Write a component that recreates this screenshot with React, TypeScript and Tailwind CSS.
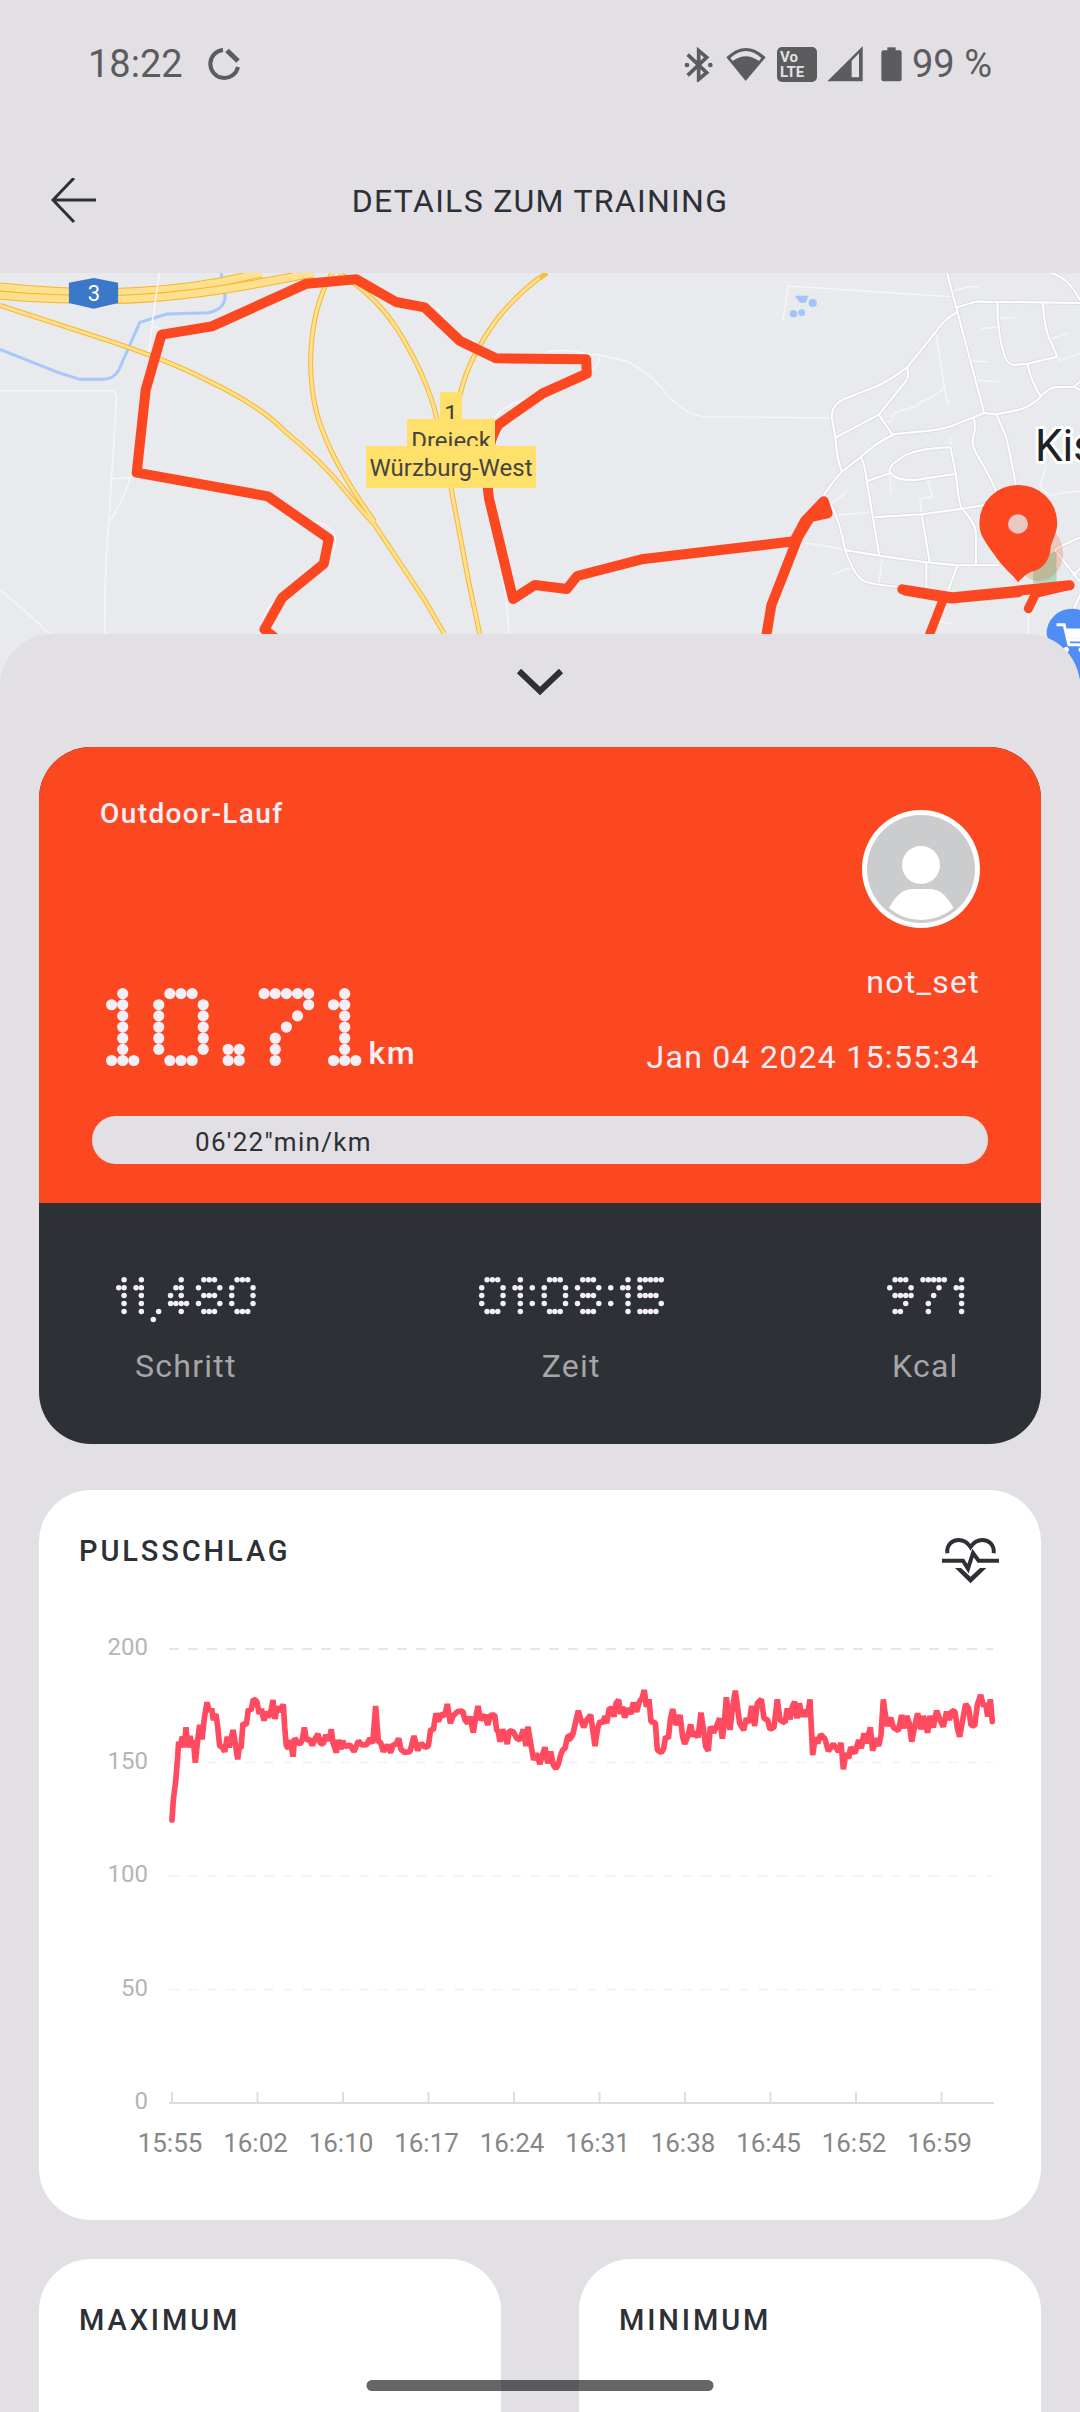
import React from 'react';

type Glyph = { cols: number; rows: string[] };

const SMALL_GLYPHS: Record<string, Glyph> = {
  '0': { cols: 5, rows: ['.###.', '#...#', '#...#', '#...#', '.###.'] },
  '1': { cols: 2, rows: ['.#', '##', '.#', '.#', '.#'] },
  '4': { cols: 4, rows: ['..#.', '.##.', '#.#.', '####', '..#.'] },
  '5': { cols: 5, rows: ['#####', '#....', '####.', '....#', '####.'] },
  '7': { cols: 5, rows: ['#####', '...#.', '..#..', '.#...', '.#...'] },
  '8': { cols: 5, rows: ['.###.', '#...#', '.###.', '#...#', '.###.'] },
  '9': { cols: 5, rows: ['.###.', '#...#', '.####', '...#.', '.##..'] },
  ':': { cols: 1, rows: ['.', '#', '.', '#', '.'] },
  ',': { cols: 2, rows: ['..', '..', '..', '..', '.#', '#.'] },
};

const LARGE_GLYPHS: Record<string, Glyph> = {
  '0': { cols: 5, rows: ['.###.', '#...#', '#...#', '#...#', '#...#', '#...#', '.###.'] },
  '1': { cols: 3, rows: ['.#.', '##.', '.#.', '.#.', '.#.', '.#.', '###'] },
  '7': { cols: 5, rows: ['#####', '....#', '...#.', '..#..', '.#...', '.#...', '.#...'] },
  '.': { cols: 2, rows: ['..', '..', '..', '..', '..', '##', '##'] },
};

function DotDisplay({ value, large = false }: { value: string; large?: boolean }) {
  const glyphs = large ? LARGE_GLYPHS : SMALL_GLYPHS;
  const px = large ? 11.12 : 5.33;
  const py = large ? 11.15 : 7.93;
  const r = large ? 5.6 : 2.75;
  const rowCount = large ? 7 : 5;
  const dots: { x: number; y: number }[] = [];
  let cursor = 0;
  for (const ch of value) {
    const glyph = glyphs[ch];
    glyph.rows.forEach((row, j) => {
      [...row].forEach((cell, i) => {
        if (cell === '#') dots.push({ x: r + (cursor + i) * px, y: r + j * py });
      });
    });
    cursor += glyph.cols + 1.24;
  }
  const width = (cursor - 2.24) * px + 2 * r;
  const height = (rowCount - 1) * py + 2 * r;
  return (
    <svg role="img" aria-label={value} width={width} height={height} className="block overflow-visible fill-[#f4eff7]">
      {dots.map((d, i) => (
        <circle key={i} cx={d.x} cy={d.y} r={r} />
      ))}
    </svg>
  );
}

function StatusBar() {
  return (
    <div className="flex h-32 items-center justify-between pr-[88px] pl-[88px] text-[38px] leading-[44px] text-[#5c5b5e]">
      <div className="flex items-center gap-6">
        <span>18:22</span>
        <svg width="34" height="34" viewBox="0 0 34 34" fill="none" stroke="currentColor" strokeWidth="4" className="block">
          <path d="M16 3A14 14 0 1 0 31 20" />
          <path d="M20 3.500L31 14" strokeWidth="5" />
        </svg>
      </div>
      <div className="flex items-center">
        <svg width="30" height="35" viewBox="75 45 90 105" className="block">
          <path d="M86 68L143 122L119 142V56L143 76L86 130" fill="none" stroke="currentColor" strokeWidth="11" />
          <circle cx="84" cy="99" r="7" fill="currentColor" />
          <circle cx="154" cy="99" r="7" fill="currentColor" />
        </svg>
        <svg width="40" height="35" viewBox="200 45 120 105" className="ml-3 block">
          <path d="M201 76Q260 20 319 76L259 147Z" fill="currentColor" />
          <path d="M213 78Q260 36 306 78L299 87Q259 59 220 87Z" fill="#e2e0e5" />
        </svg>
        <div className="ml-[11px] flex h-[35px] w-10 flex-col rounded-[5px] bg-[#5c5b5e] pt-[3px] pl-[3px] text-[15px] leading-[15px] font-bold text-[#e2e0e5]">
          <span>Vo</span>
          <span>LTE</span>
        </div>
        <svg width="36" height="36" viewBox="502 46 108 108" className="ml-2.5 block">
          <path d="M503 152L609 47V152Z" fill="currentColor" />
          <path d="M576 90L598 68V140H576Z" fill="#e2e0e5" />
        </svg>
        <svg width="21" height="35" viewBox="665 47 63 105" className="ml-[18px] block" fill="currentColor">
          <rect x="666" y="57" width="61" height="93" rx="7" />
          <rect x="684" y="48" width="25" height="14" />
        </svg>
        <span className="ml-2.5">99 %</span>
      </div>
    </div>
  );
}

function Header() {
  return (
    <header className="grid h-[145px] grid-cols-[120px_1fr_120px] items-center text-[#2d3035]">
      <button aria-label="Zurück" className="flex h-full items-center pl-[51px]">
        <svg width="46" height="46" viewBox="0 0 46 46" fill="none" stroke="currentColor" strokeWidth="3" className="block">
          <path d="M45 22H2M23 0L2 22L23 44" />
        </svg>
      </button>
      <h1 className="text-center text-[32px] leading-10 tracking-[0.04em]">DETAILS ZUM TRAINING</h1>
    </header>
  );
}

const LEFT = 'translate(0 -3) scale(0.34436 0.33333)';
const RIGHT = 'translate(540 -3) scale(0.34436 0.33333)';

const HIGHWAYS = [
  'M0 51Q160 68 300 69Q480 66 640 36L760 9',
  'M0 76Q160 90 320 89Q520 84 740 42L910 9',
];
const RAMPS = [
  'M0 106L250 190Q480 265 600 330Q760 410 825 482Q930 570 1000 658Q1060 735 1085 760L1230 985L1290 1091',
  'M965 9Q905 110 902 270Q902 400 940 490Q980 600 1088 755',
  'M985 9Q1090 75 1155 180Q1240 320 1270 450L1310 655L1360 930L1393 1091',
  'M1568 22Q1500 75 1445 145Q1360 265 1337 370Q1318 440 1310 520',
];
const STREETS = [
  'M1182 9L1290 429',
  'M1210 112L1255 98Q1270 94 1290 95L1568 99',
  'M1210 128Q1170 150 1150 185L1066 292Q1010 335 975 350L880 388Q847 405 847 440L858 505Q862 570 877 605',
  'M1066 292Q1072 320 1065 330L984 434L1022 492',
  'M984 434L858 503',
  'M822 680Q845 640 877 605L932 560Q980 515 1030 492L1130 482Q1185 474 1200 466L1290 429L1325 433L1390 420Q1420 412 1450 385Q1475 355 1495 352L1550 350L1568 335',
  'M1550 350L1568 360',
  'M1328 98Q1328 190 1348 255Q1358 285 1378 285L1415 281L1502 260',
  'M1460 100Q1465 175 1480 208L1502 260',
  'M1415 283Q1430 345 1455 380',
  'M1478 9Q1530 15 1568 90',
  'M1325 433Q1355 500 1358 520Q1375 600 1382 650',
  'M1258 440Q1268 470 1258 500Q1252 525 1270 555Q1310 625 1325 665',
  'M932 560Q945 590 950 640L985 855',
  'M950 633L1016 610Q1010 590 1040 570Q1080 535 1192 532L1208 612Q1215 700 1225 715Q1265 760 1266 790V885',
  'M1016 605Q1030 632 1090 630L1208 611',
  'M972 742L1110 733L1225 716L1290 705',
  'M1108 733L1132 878',
  'M845 705Q870 750 886 840L985 857L1120 877L1210 886H1335',
  'M886 840Q910 910 935 930Q960 945 1060 952',
  'M1122 878V955',
  'M1212 886L1185 962',
  'M1495 840Q1510 828 1568 802',
  'M1495 840L1568 935',
  'M1568 895L1548 918',
  'M1568 975L1545 1030',
  'M1390 969H1430',
];
const LANES_RIGHT = [
  'M720 48L1197 80M1200 62L1245 50H1275',
  'M720 48L706 152',
  'M20 245Q80 235 140 252L174 255L250 273Q300 295 350 350Q410 430 470 440L845 444',
  'M174 255Q170 290 150 300',
  'M1150 188L1174 352L1186 408M1174 352Q1165 370 1102 398L1100 406L1027 430L1020 455H1006',
  'M1330 144H1378M1282 176L1328 171M1255 272L1300 276M1268 331L1332 335',
  'M1480 208L1535 188M1502 260L1510 272L1568 250',
  'M1193 505V532M1016 612L1020 672M1125 630L1140 680L1103 687L1108 730',
  'M850 700L890 665M865 735L960 727M768 818L826 827L886 840M852 912L905 892M994 862L984 940',
  'M1470 585L1452 650L1478 676L1568 662M1418 1020V1091M1160 1055L1194 1061',
];
const LANES_LEFT = [
  'M463 9L430 262M440 168L470 176',
  'M0 362H325Q338 365 338 390L316 760Q303 900 304 1091',
  'M320 628L378 622Q365 680 316 758',
  'M0 962Q80 1025 142 1091',
  'M900 752Q975 765 975 815Q972 850 945 870M800 990Q765 1020 760 1070',
  'M1265 112Q1285 125 1290 150M1440 278H1500M1434 445Q1470 400 1540 385',
  'M1415 690L1470 985L1478 1091',
];

function MapView() {
  return (
    <section aria-label="Karte" className="relative h-[413px] overflow-hidden bg-[#e8eaed]">
      <svg
        viewBox="0 0 1080 413"
        preserveAspectRatio="xMidYMin slice"
        fill="none"
        className="block h-full w-full [&_path]:[vector-effect:non-scaling-stroke]"
      >
        <g transform={LEFT} strokeLinejoin="round">
          <g stroke="#f5f6f7" strokeWidth="1.5">
            {LANES_LEFT.map((d) => <path key={d} d={d} />)}
          </g>
          <path
            d="M0 238L170 308L232 328H300Q330 327 345 300L406 157L485 132L605 128Q650 118 653 85V60L642 9"
            stroke="#a8c7fa"
            strokeWidth="3"
          />
          {HIGHWAYS.map((d) => (
            <g key={d}>
              <path d={d} stroke="#f6b62a" strokeWidth="9" />
              <path d={d} stroke="#fee08f" strokeWidth="7" />
            </g>
          ))}
          {RAMPS.map((d) => <path key={d} d={d} stroke="#f5b830" strokeWidth="5" />)}
          {RAMPS.map((d) => <path key={d} d={d} stroke="#fee08f" strokeWidth="3" />)}
          <path d="M463 9L441 160" stroke="#f5f6f7" strokeWidth="1.5" />
          <path d="M200 38L272 24L343 38V99L272 116L200 99Z" fill="#3b78c9" />
        </g>
        <g transform={RIGHT} strokeLinejoin="round">
          <g stroke="#f5f6f7" strokeWidth="1.5">
            {LANES_RIGHT.map((d) => <path key={d} d={d} />)}
          </g>
          {STREETS.map((d) => <path key={d} d={d} stroke="#dcdee2" strokeWidth="4" />)}
          {STREETS.map((d) => <path key={d} d={d} stroke="#ffffff" strokeWidth="2" />)}
          <path d="M0 24L20 9" stroke="#f5bd3f" strokeWidth="5" />
          <path d="M740 77H780L772 98H755Z" fill="#a2c4fb" />
          <g fill="#a2c4fb">
            <circle cx="792" cy="99" r="12" />
            <circle cx="736" cy="131" r="11" />
            <circle cx="760" cy="128" r="10" />
          </g>
          <path d="M1432 860L1500 845V940H1432Z" fill="#a9dbbf" />
          <ellipse cx="1450" cy="850" rx="69" ry="83" fill="#fc4821" opacity="0.22" />
        </g>
        <g stroke="#fc4821" strokeWidth="10" strokeLinejoin="round" strokeLinecap="round">
          <g transform={LEFT}>
            <path d="M800 1105L768 1078L819 984L940 882L955 806L778 679L397 608L423 360L469 194L615 169L890 41L1035 28L1150 96L1233 112L1336 213L1440 265L1702 268L1704 311L1576 370L1448 463Q1400 540 1420 685L1490 987L1553 945L1646 957L1676 918L1863 868L2306 814" />
          </g>
          <g transform={RIGHT}>
            <path d="M738 814L770 752L824 694L835 730L785 741L750 800L672 1005L655 1110" />
            <path d="M812 715L826 725" />
            <path d="M1052 958L1200 982L1538 946" />
            <path d="M1060 963L1195 987L1390 968M1430 958L1538 946L1440 970L1418 1016M1172 985L1125 1110" strokeWidth="9" />
          </g>
        </g>
        <g transform={RIGHT}>
          <path
            d="M1388 937C1375 915 1345 895 1320 855C1290 810 1276 795 1276 758A112 112 0 0 1 1502 758C1502 785 1492 800 1483 830C1482 870 1460 895 1435 903C1412 908 1400 925 1388 937Z"
            fill="#fc4821"
          />
          <circle cx="1388" cy="762" r="29" fill="#edc7c2" />
          <path d="M1471 1090A74 74 0 0 1 1619 1090C1619 1130 1580 1170 1568 1230C1550 1150 1471 1130 1471 1090Z" fill="#4f8ef5" />
          <path d="M1500 1064H1522L1536 1124H1580M1530 1080H1580V1110H1535" stroke="#ffffff" strokeWidth="3" />
          <path d="M1528 1080H1580V1106H1536Z" fill="#ffffff" />
          <circle cx="1528" cy="1139" r="8" fill="#ffffff" />
          <circle cx="1572" cy="1139" r="8" fill="#ffffff" />
        </g>
        <text x="94" y="28" textAnchor="middle" fontSize="22" fill="#ffffff">3</text>
        <text x="1035" y="188" fontSize="44" fill="#202124" stroke="#ffffff" strokeWidth="6" paintOrder="stroke" strokeLinejoin="round">Kis</text>
      </svg>
      <div className="absolute top-[119px] left-[367px] flex w-[168px] flex-col items-center text-[24px] leading-[44px] text-[#45453f]">
        <span className="h-[42px] bg-[#fee06a] px-1">1</span>
        <span className="-mt-[15px] h-[42px] bg-[#fee06a] px-1">Dreieck</span>
        <span className="-mt-[15px] h-[42px] bg-[#fee06a] px-1 whitespace-nowrap">Würzburg-West</span>
      </div>
    </section>
  );
}

function Avatar() {
  return (
    <svg width="118" height="118" viewBox="0 0 118 118" className="block">
      <circle cx="59" cy="59" r="59" fill="#ffffff" />
      <circle cx="59" cy="59" r="54" fill="#cbcccd" />
      <circle cx="59" cy="55" r="19" fill="#ffffff" />
      <path d="M27 98C34 84 43 79 50 79H68C76 79 84 84 91.500 98Q77 110 59 110Q41 110 27 98Z" fill="#ffffff" />
    </svg>
  );
}

function SummaryCard() {
  const stats = [
    { value: '11,480', label: 'Schritt' },
    { value: '01:08:15', label: 'Zeit' },
    { value: '971', label: 'Kcal' },
  ];
  return (
    <section className="overflow-hidden rounded-[52px] bg-[#2d3035]">
      <div className="bg-[#fc4821] px-[53px] pt-[47px] pb-[39px] text-[#f4eff7]">
        <div className="flex justify-between px-2">
          <div className="flex flex-col justify-between pb-1">
            <h2 className="text-[28px] leading-10 font-medium tracking-wider">Outdoor-Lauf</h2>
            <div className="flex items-end gap-[7px] pl-[6px]">
              <div className="mb-[7px]">
                <DotDisplay value="10.71" large />
              </div>
              <span className="text-[32px] leading-10 font-medium tracking-wider">km</span>
            </div>
          </div>
          <div className="flex flex-col items-end pt-4 text-[32px] leading-10 tracking-[0.04em]">
            <Avatar />
            <span className="mt-[34px]">not_set</span>
            <time className="mt-[35px]">Jan 04 2024 15:55:34</time>
          </div>
        </div>
        <div className="mt-[39px] h-12 rounded-full bg-[#e2e0e5] pl-[103px] text-[26px] leading-[52px] tracking-wider text-[#2d3035]">
          06&apos;22&quot;min/km
        </div>
      </div>
      <div className="flex justify-between px-[77px] pt-[74px] pb-[58px]">
        {stats.map((s) => (
          <div key={s.label} className="flex flex-col items-center gap-8">
            <DotDisplay value={s.value} />
            <span className="text-[32px] leading-10 tracking-[0.04em] text-[#a6a5a9]">{s.label}</span>
          </div>
        ))}
      </div>
    </section>
  );
}

const PULSE_FIRST_HALF =
  '66,540 70,480 77,425 83,350 86,305 90,322 97,290 103,322 108,262 113,322 120,288 127,322 130,300 136,368 143,300 149,255 156,298 163,235 171,187 178,215 185,205 190,240 198,222 203,260 209,318 217,322 224,335 232,290 238,322 249,270 256,310 263,358 268,322 273,325 279,250 289,255 295,207 303,212 310,178 320,183 328,222 334,207 342,242 348,215 356,232 363,212 369,180 375,237 382,200 390,215 400,193 404,260 409,318 416,325 421,300 429,350 434,295 442,305 450,312 457,300 463,262 469,300 479,298 487,316 495,296 504,282 511,310 519,312 528,285 537,302 544,268 549,308 559,338 565,300 573,328 578,302 585,320 600,315 612,335 625,303 636,315 650,314 660,295 668,310 677,198 685,305 692,308 700,335 712,315 722,338 730,312 737,315 746,295 753,328 763,337 780,335 792,288 803,332 813,310 825,322 835,318 842,268 850,270 858,220 865,245 873,222 884,228 892,192 901,250 909,228 922,215 938,213 945,240 953,250 960,230 970,278 976,240 984,198 992,240 1005,225 1013,255 1022,225 1034,225 1040,270 1045,275 1050,305 1058,268 1072,312 1078,272 1090,275 1100,295 1110,300 1120,268 1128,318 1134,260 1142,310 1151,360 1159,340 1170,372 1177,345 1185,322 1193,370 1202,335 1210,375 1218,386 1225,372 1232,345 1238,330 1245,325 1253,290 1265,285';
const PULSE_SECOND_HALF =
  '0,297 8,285 15,255 25,212 33,240 41,262 50,240 62,225 69,275 75,318 83,265 90,243 98,250 105,228 110,250 118,205 126,207 132,230 138,190 146,180 152,222 157,200 164,232 175,205 183,222 190,188 200,215 208,185 216,175 223,150 229,200 237,178 243,245 256,248 262,330 274,338 281,325 287,290 295,295 301,240 308,207 318,255 330,225 338,290 344,312 353,290 362,253 368,290 375,275 384,292 393,218 400,265 407,320 415,332 421,260 431,278 440,258 449,235 457,296 463,250 469,172 480,270 488,200 496,152 503,205 509,250 521,270 529,235 538,248 545,198 554,258 562,190 574,178 582,235 593,240 600,268 612,262 622,178 630,240 645,248 652,205 660,238 667,200 674,185 681,235 688,190 696,230 703,210 712,230 720,178 728,345 736,292 743,310 752,283 765,297 775,333 790,312 806,335 813,308 820,388 828,340 836,355 842,322 855,340 866,300 874,325 882,280 889,310 901,262 908,332 918,295 926,318 933,285 940,178 946,225 952,258 962,233 970,262 985,272 995,225 1003,265 1010,228 1018,250 1025,305 1035,255 1043,220 1052,268 1060,228 1073,278 1080,228 1090,262 1100,212 1110,240 1120,260 1130,215 1138,240 1146,212 1155,215 1162,265 1169,290 1178,240 1187,192 1196,205 1203,255 1214,258 1222,195 1232,165 1241,200 1247,190 1253,230 1261,178 1267,245';

const TIMES = ['15:55', '16:02', '16:10', '16:17', '16:24', '16:31', '16:38', '16:45', '16:52', '16:59'];

function PulseChart() {
  return (
    <svg viewBox="0 0 922 540" role="img" aria-label="Pulsschlag" className="mt-[46px] block h-auto w-full">
      {[200, 150, 100, 50, 0].map((v, i) => {
        const y = 19 + i * 113.5;
        return (
          <g key={v}>
            {v > 0 && (
              <line x1="90" x2="914" y1={y} y2={y} stroke={v === 200 ? '#e6e6e6' : '#f5f5f5'} strokeWidth="2" strokeDasharray="10 9" />
            )}
            <text x="69" y={y + 6} textAnchor="end" fontSize="24" fill="#b5b5b5">{v}</text>
          </g>
        );
      })}
      <line x1="90" x2="915" y1="473" y2="473" stroke="#dcdcdc" strokeWidth="2" />
      {TIMES.map((t, i) => (
        <g key={t}>
          <line x1={93 + i * 85.5} x2={93 + i * 85.5} y1="462" y2="473" stroke="#dedede" strokeWidth="2" />
          <text x={91 + i * 85.5} y="522" textAnchor="middle" fontSize="26" fill="#878787">{t}</text>
        </g>
      ))}
      <g fill="none" stroke="#ff4a60" strokeWidth="17" strokeLinejoin="bevel" strokeLinecap="round">
        <g transform="translate(71 10) scale(0.33333)">
          <polyline points={PULSE_FIRST_HALF} />
        </g>
        <g transform="translate(491 10) scale(0.33333)">
          <polyline points={PULSE_SECOND_HALF} />
        </g>
      </g>
    </svg>
  );
}

function PulseCard() {
  return (
    <section className="mt-[46px] rounded-[52px] bg-white px-10 pt-[43px] pb-[50px]">
      <div className="flex items-start justify-between">
        <h2 className="text-[29px] leading-9 font-medium tracking-widest text-[#2d3035]">PULSSCHLAG</h2>
        <svg width="60" height="47" viewBox="900 860 180 141" fill="none" stroke="#2d3035" strokeWidth="12" className="mt-1 block">
          <path d="M919 909C916 883 934 869 953 869C970 869 980 877 988.500 890C997 877 1007 869 1024 869C1043 869 1061 883 1058 909" />
          <path d="M903 931H966L981 955L996 908L1013 931H1074" />
          <path d="M942 953H960L988.500 979L1017 953H1036L988.500 999Z" fill="#2d3035" stroke="none" />
        </svg>
      </div>
      <PulseChart />
    </section>
  );
}

export default function App() {
  return (
    <main className="relative flex min-h-screen flex-col overflow-hidden bg-[#e2e0e5] font-['Roboto',sans-serif]">
      <StatusBar />
      <Header />
      <MapView />
      <div className="relative -mt-[52px] flex flex-1 flex-col rounded-t-[52px] bg-[#e2e0e5] px-[39px]">
        <button aria-label="Karte vergrößern" className="flex h-[113px] items-start justify-center pt-[34px]">
          <svg width="48" height="28" viewBox="0 0 48 28" fill="none" stroke="#2d3035" strokeWidth="6" className="block">
            <path d="M3 3L24 23L45 3" />
          </svg>
        </button>
        <SummaryCard />
        <PulseCard />
        <div className="mt-[39px] grid min-h-[153px] flex-1 grid-cols-2 gap-[78px]">
          {['MAXIMUM', 'MINIMUM'].map((label) => (
            <section key={label} className="rounded-t-[52px] bg-white px-10 pt-[43px]">
              <h2 className="text-[29px] leading-9 font-medium tracking-widest text-[#2d3035]">{label}</h2>
            </section>
          ))}
        </div>
      </div>
      <div className="absolute bottom-[21px] left-1/2 h-[11px] w-[347px] -translate-x-1/2 rounded-full bg-black/60" />
    </main>
  );
}
